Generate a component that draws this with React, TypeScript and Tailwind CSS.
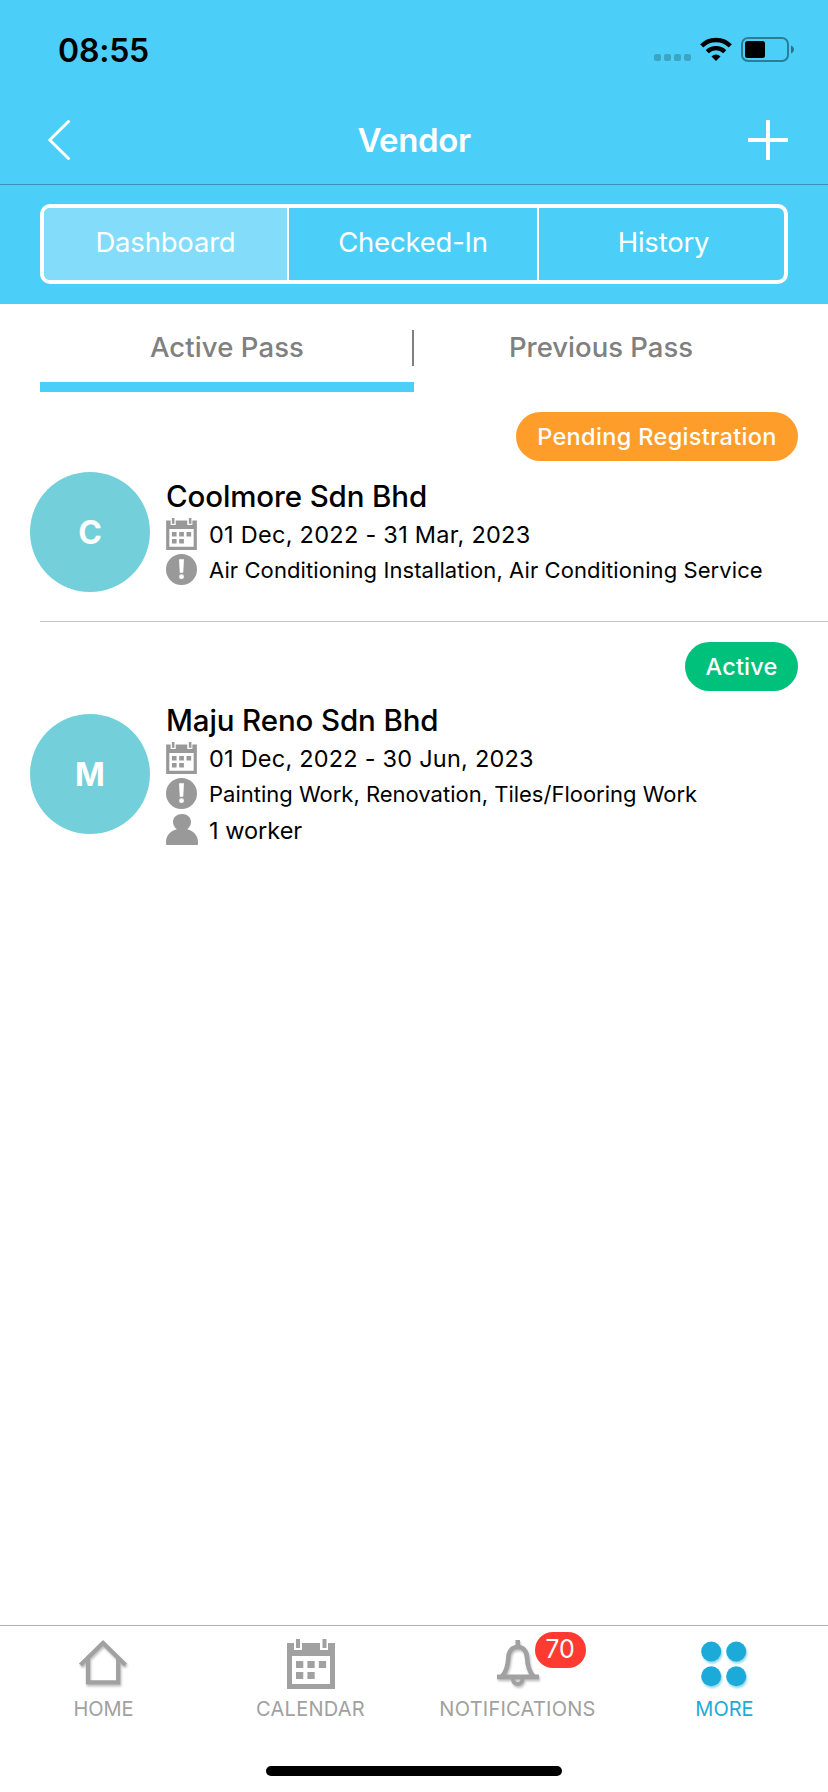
import React from 'react';
import clsx from 'clsx';

type Vendor = {
  initial: string;
  name: string;
  period: string;
  services: string;
  workers?: string;
  status: string;
  // classes that differ from one row to the next
  statusClass: string;
  bodyClass: string;
  avatarClass: string;
  periodClass: string;
  servicesClass: string;
};

const VENDORS: Vendor[] = [
  {
    initial: 'C',
    name: 'Coolmore Sdn Bhd',
    period: '01 Dec, 2022 - 31 Mar, 2023',
    services: 'Air Conditioning Installation, Air Conditioning Service',
    status: 'Pending Registration',
    statusClass: 'bg-[#ff9d2b] w-[282px] tracking-[0.35px]',
    bodyClass: 'mt-[11px] h-[160px]',
    avatarClass: 'mt-0',
    periodClass: 'tracking-[0.27px]',
    servicesClass: 'tracking-[0.09px]',
  },
  {
    initial: 'M',
    name: 'Maju Reno Sdn Bhd',
    period: '01 Dec, 2022 - 30 Jun, 2023',
    services: 'Painting Work, Renovation, Tiles/Flooring Work',
    workers: '1 worker',
    status: 'Active',
    statusClass: 'bg-[#00c17c] w-[113px] tracking-[0.2px]',
    bodyClass: 'mt-[5px]',
    avatarClass: 'mt-[18px]',
    periodClass: 'tracking-[0.22px]',
    servicesClass: 'tracking-normal',
  },
];

const CalendarIcon = ({ className }: { className?: string }) => (
  <svg viewBox="0 0 48 50" className={className} fill="currentColor">
    <path d="M0 4h7v7h8V4h18v7h8V4h7v46H0z M5 17v28h38V17z" fillRule="evenodd" />
    <path d="M9 0h4v9H9zM35.500 0h4v9h-4z" />
    <path d="M9 22h7.300v7H9zM20.400 22h7.300v7h-7.300zM31.800 22h7.300v7h-7.300zM9 33h7.300v7H9zM20.400 33h7.300v7h-7.300z" />
  </svg>
);

const AlertIcon = () => (
  <svg viewBox="0 0 31 31" className="size-[31px]">
    <circle cx="15.500" cy="15.500" r="15.500" fill="#999" />
    <path d="M13 5.200h5l-0.800 13.600h-3.400z" fill="#fff" />
    <circle cx="15.500" cy="22.700" r="2.400" fill="#fff" />
  </svg>
);

const PersonIcon = () => (
  <svg viewBox="0 0 32 31" className="h-[31px] w-8" fill="#999">
    <path d="M16 0c5 0 9 3 9 8 0 3-1.500 5.500-3.800 7.200C27.500 16.500 32 21.500 32 28v1.500c0 1-.5 1.500-1.500 1.500h-29C.5 31 0 30.500 0 29.500V28c0-6.500 4.500-11.500 10.800-12.800C8.500 13.500 7 11 7 8c0-5 4-8 9-8z" />
  </svg>
);

const HomeIcon = () => (
  <svg viewBox="0 0 48 46" className="mr-px h-[46px] w-12 overflow-visible drop-shadow-[1px_2px_1px_rgba(0,0,0,0.25)]" fill="none" stroke="#a1a1a1" strokeWidth="4.300">
    <path d="M1.500 25L24 3l22.500 22" />
    <path d="M9 18.500V42.300h30.200V18.500" />
  </svg>
);

const BellIcon = () => (
  <svg viewBox="0 0 42 46" className="h-[46px] w-[42px] overflow-visible drop-shadow-[1px_2px_1px_rgba(0,0,0,0.25)]" fill="none" stroke="#a1a1a1">
    <path d="M18.500 0h4.500v6h-4.500z" fill="#a1a1a1" stroke="none" />
    <path d="M5 36.500C9.500 31 11 25 11.300 18 11.600 11 15 7 20.700 7s9.100 4 9.400 11c.3 7 1.800 13 6.300 18.500" strokeWidth="4.600" />
    <path d="M0 34.500h42v4.700H0z" fill="#a1a1a1" stroke="none" />
    <path d="M16 39c0 3.200 2 5 4.700 5s4.700-1.800 4.700-5" strokeWidth="4" />
  </svg>
);

const MoreIcon = () => (
  <svg viewBox="0 0 46 46" className="mr-px size-[46px] overflow-visible drop-shadow-[1px_2px_1px_rgba(28,171,216,0.5)]" fill="#1cabd8">
    <circle cx="10.200" cy="10.500" r="10" />
    <circle cx="35.200" cy="10.500" r="10" />
    <circle cx="10.200" cy="35.300" r="10" />
    <circle cx="35.200" cy="35.300" r="10" />
  </svg>
);

const StatusBar = () => (
  <div className="flex h-24 justify-between pl-[58px] pr-[34px]">
    <span className="mt-[31px] text-[32px] leading-10 font-semibold text-black tracking-[-0.2px]">08:55</span>
    <div className="mt-[37px] flex h-[25px]">
      <div className="mt-[17px] flex gap-[3px]">
        {[...Array(4)].map((_, i) => (
          <span key={i} className="size-[7px] rounded-[2px] bg-black/20"></span>
        ))}
      </div>
      <svg viewBox="0 0 32 24" className="ml-[9px] h-6 w-8" fill="none" stroke="#000" strokeWidth="4.400">
        <path d="M1.700 8.900a20.400 20.400 0 0 1 28.600 0" />
        <path d="M7.300 14.700a12.400 12.400 0 0 1 17.400 0" />
        <path d="M16 24l-4.500-4.600a6.500 6.500 0 0 1 9 0z" fill="#000" stroke="none" />
      </svg>
      <svg viewBox="0 0 53 25" className="ml-[9px] h-[25px] w-[53px]">
        <rect x="1" y="1" width="46" height="23" rx="6" fill="none" stroke="#000" strokeOpacity="0.400" strokeWidth="2" />
        <rect x="4" y="4" width="20" height="17" rx="2.500" />
        <path d="M50 8.500c1.800.8 3 2.300 3 4s-1.200 3.200-3 4z" fillOpacity="0.450" />
      </svg>
    </div>
  </div>
);

const VendorRow: React.FC<{ vendor: Vendor }> = ({ vendor }) => (
  <div>
    <div className="flex justify-end pt-5 pr-[30px]">
      <span className={clsx('flex h-[49px] items-center justify-center rounded-full text-[23.5px] font-medium text-white whitespace-nowrap', vendor.statusClass)}>
        {vendor.status}
      </span>
    </div>
    <div className={clsx('flex items-start pl-[30px]', vendor.bodyClass)}>
      <div className={clsx('flex size-[120px] shrink-0 items-center justify-center rounded-full bg-[#73d0db] pt-px text-[32px] font-bold text-white', vendor.avatarClass)}>
        {vendor.initial}
      </div>
      <div className="ml-4 text-black whitespace-nowrap">
        <h2 className="mt-1 h-[42px] text-[29.500px] leading-[40px] font-medium tracking-[-0.12px]">{vendor.name}</h2>
        <div className="flex h-9 items-start">
          <CalendarIcon className="h-8 w-[31px] text-[#999]" />
          <span className={clsx('ml-3 text-[23.500px] leading-[34px]', vendor.periodClass)}>{vendor.period}</span>
        </div>
        <div className="flex h-9 items-start">
          <AlertIcon />
          <span className={clsx('ml-3 text-[22px] leading-[33px]', vendor.servicesClass)}>{vendor.services}</span>
        </div>
        {vendor.workers && (
          <div className="flex h-9 items-start">
            <PersonIcon />
            <span className="ml-[11px] text-[23.500px] leading-[33px]">{vendor.workers}</span>
          </div>
        )}
      </div>
    </div>
  </div>
);

const App: React.FC = () => {
  return (
    <div className="flex h-[1792px] w-[828px] flex-col overflow-hidden bg-white font-['Inter',sans-serif]">
      {/* Header */}
      <header className="h-[304px] shrink-0 bg-[#4bcff8] text-white">
        <StatusBar />
        <div className="flex h-[89px] items-center justify-between border-b border-[#3a93ae] pr-10 pl-12">
          <svg viewBox="0 0 40 40" className="size-10" fill="none" stroke="currentColor" strokeWidth="3" strokeLinecap="round">
            <path d="M20.500 1.500L1.800 20l18.700 18.500" />
          </svg>
          <h1 className="mt-0.5 -ml-2 text-[33px] font-semibold tracking-[-0.4px]">Vendor</h1>
          <svg viewBox="0 0 40 40" className="size-10" fill="none" stroke="currentColor" strokeWidth="4">
            <path d="M20 0v40M0 20h40" />
          </svg>
        </div>
        <div className="mx-10 mt-[19px] flex h-20 overflow-hidden rounded-[10px] border-4 border-white text-[27.500px] tracking-[-0.2px]">
          <button className="w-[243px] bg-[#84dcfb] pb-[3px]">Dashboard</button>
          <button className="w-[252px] border-x-2 border-white pb-[3px]">Checked-In</button>
          <button className="flex-1 pb-[3px] pl-1">History</button>
        </div>
      </header>

      {/* Pass tabs */}
      <div className="flex h-[88px] shrink-0 px-10 text-[27.500px] font-medium text-[#808080]">
        <button className="w-[374px] border-b-10 border-[#4bcff8] pt-[10px]">
          <span className="flex h-9 items-center justify-center border-r-2 border-[#808080] pl-0.5 tracking-[0.1px]">Active Pass</span>
        </button>
        <button className="flex-1 border-b-10 border-transparent pt-[10px]">Previous Pass</button>
      </div>

      {/* Vendor list */}
      <main className="flex-1">
        <VendorRow vendor={VENDORS[0]} />
        <div className="-mt-[11px] ml-10 h-px bg-[#c6c6c6]"></div>
        <VendorRow vendor={VENDORS[1]} />
      </main>

      {/* Tab bar */}
      <nav className="h-[167px] shrink-0 border-t border-[#b0b0b0] text-[#a1a1a1]">
        <div className="grid h-[140px] grid-cols-4 text-[20px]">
          <div className="flex flex-col items-center pt-[14px]">
            <HomeIcon />
            <span className="mt-[11px] leading-6">HOME</span>
          </div>
          <div className="flex flex-col items-center pt-[13px]">
            <CalendarIcon className="h-[50px] w-12" />
            <span className="mt-2 leading-6 tracking-[0.25px]">CALENDAR</span>
          </div>
          <div className="flex flex-col items-center pt-[14px]">
            <div className="relative">
              <BellIcon />
              <span className="absolute -top-2 left-[38px] flex h-9 w-[51px] items-center justify-center rounded-full bg-[#ff3b31] text-[25px] text-white">70</span>
            </div>
            <span className="mt-[11px] leading-6 tracking-[0.25px]">NOTIFICATIONS</span>
          </div>
          <div className="flex flex-col items-center pt-[15px] text-[#1cabd8]">
            <MoreIcon />
            <span className="mt-[10px] leading-6">MORE</span>
          </div>
        </div>
        <div className="mx-auto h-2.5 w-[296px] rounded-full bg-black"></div>
      </nav>
    </div>
  );
};

export default App;
